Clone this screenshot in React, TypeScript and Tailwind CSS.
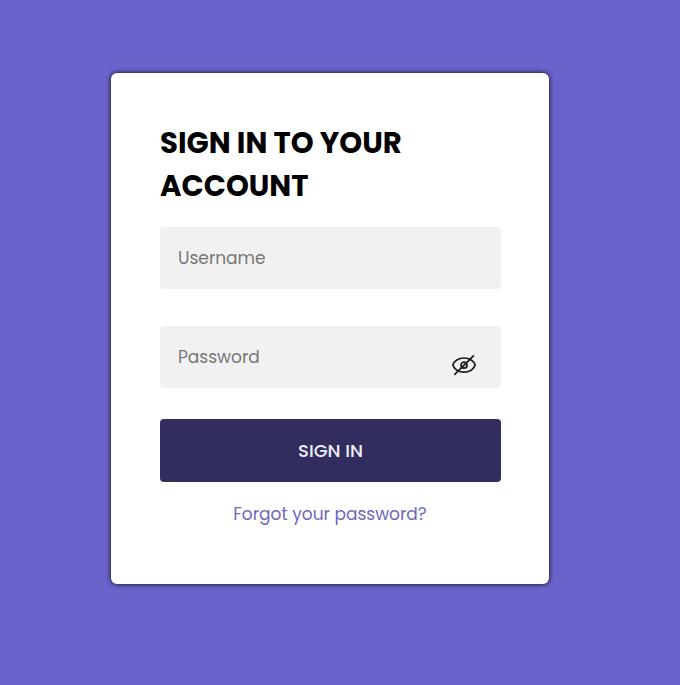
import React from "react";

function EyeOffIcon() {
  return (
    <svg width="26" height="22" viewBox="0 0 26 22" fill="none" stroke="#1c1c1c" strokeWidth="1.7" strokeLinecap="round">
      <path d="M1.900 11C2.900 6.900 7.600 4 13 4S23.100 6.900 24.100 11C23.100 15.200 18.400 18.200 13 18.200S2.900 15.200 1.900 11Z" strokeLinejoin="round" />
      <circle cx="13" cy="11.200" r="3" />
      <path d="M3.800 20.400L22.400 1.800" />
    </svg>
  );
}

export default function App() {
  return (
    <main className="h-[685px] w-full bg-[#6963cb] pl-[111px] pt-[73px] font-['Poppins','Inter',sans-serif]">
      <form
        className="flex h-[511px] w-[438px] flex-col rounded-[6px] bg-white px-[49px] pt-[48px] shadow-[0_0_5px_0px_rgba(0,0,0,0.95)]"
        onSubmit={(e) => e.preventDefault()}
      >
        <h1 className="text-[29.15px] font-bold leading-[43px] text-black">
          <span className="block whitespace-nowrap">SIGN IN TO YOUR</span>
          <span className="block whitespace-nowrap">ACCOUNT</span>
        </h1>
        <input
          aria-label="Username"
          placeholder="Username"
          className="mt-[20px] h-[62px] w-[341px] shrink-0 rounded-[4px] bg-[#f1f1f1] px-[18px] text-[17px] outline-none placeholder:text-[#777777]"
        />
        <div className="mt-[37px] flex h-[62px] w-[341px] shrink-0 items-center rounded-[4px] bg-[#f1f1f1] pl-[18px] pr-[24px]">
          <input
            aria-label="Password"
            type="password"
            placeholder="Password"
            className="h-full min-w-0 flex-1 bg-transparent text-[17px] outline-none placeholder:text-[#777777]"
          />
          <span className="mt-[15px]">
            <EyeOffIcon />
          </span>
        </div>
        <button className="mt-[31px] h-[63px] w-[341px] shrink-0 rounded-[4px] bg-[#322d5f] text-[18px] font-medium text-[#f0effc]">
          SIGN IN
        </button>
        <a className="mt-[19px] w-[340px] whitespace-nowrap text-center text-[17px] leading-[26px] text-[#7067c0]">
          Forgot your password?
        </a>
      </form>
    </main>
  );
}
